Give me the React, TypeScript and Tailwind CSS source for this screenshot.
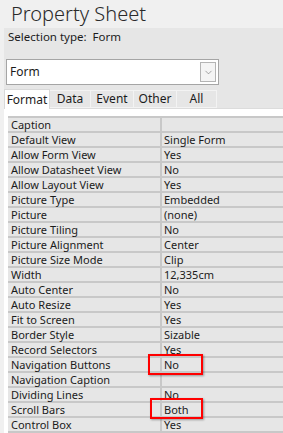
import { ChevronDown } from "lucide-react";

type Row = { readonly label: string; readonly value: string };

const rows: Row[] = [
  { label: "Caption", value: "" },
  { label: "Default View", value: "Single Form" },
  { label: "Allow Form View", value: "Yes" },
  { label: "Allow Datasheet View", value: "No" },
  { label: "Allow Layout View", value: "Yes" },
  { label: "Picture Type", value: "Embedded" },
  { label: "Picture", value: "(none)" },
  { label: "Picture Tiling", value: "No" },
  { label: "Picture Alignment", value: "Center" },
  { label: "Picture Size Mode", value: "Clip" },
  { label: "Width", value: "12,335cm" },
  { label: "Auto Center", value: "No" },
  { label: "Auto Resize", value: "Yes" },
  { label: "Fit to Screen", value: "Yes" },
  { label: "Border Style", value: "Sizable" },
  { label: "Record Selectors", value: "Yes" },
  { label: "Navigation Buttons", value: "No" },
  { label: "Navigation Caption", value: "" },
  { label: "Dividing Lines", value: "No" },
  { label: "Scroll Bars", value: "Both" },
  { label: "Control Box", value: "Yes" },
];

const tabs = ["Data", "Event", "Other", "All"];

export default function App() {
  return (
    <div className="relative h-[433px] w-[283px] overflow-hidden bg-[#f0f0f0] font-['Noto_Sans',sans-serif] text-[#1b1b1b]">
      <div className="h-[28px] pl-[11px] text-[20px] font-light leading-[28px] text-[#2a2a2a]">Property Sheet</div>

      <div className="ml-[4px] flex h-[405px] flex-col bg-[#e6e6e6]">
        <div className="h-[31px] pl-[4px] pt-[1px] text-[11.5px] leading-[15px]">Selection type:&nbsp;&nbsp;Form</div>

        <div className="ml-[2px] flex h-[26px] w-[213px] items-center border border-[#a5a5a5] bg-white pr-[2px]">
          <span className="flex-1 pl-[3px] text-[12px]">Form</span>
          <div className="flex h-[20px] w-[16px] items-center justify-center border border-[#b4b4b4] bg-[#f4f4f4]">
            <ChevronDown size={11} strokeWidth={1.25} className="text-[#666]" />
          </div>
        </div>

        <div className="mt-[3px] flex h-[20px] items-end text-[12px]">
          <div className="z-10 -mb-px flex h-[20px] w-[46px] items-center justify-center border border-b-0 border-[#d9d9d9] bg-white">
            Format
          </div>
          {tabs.map((t, i) => (
            <div
              key={t}
              className={`flex h-[18px] items-center justify-center border border-l-0 border-[#f3f3f3] ${
                i === 0 ? "w-[41px]" : i === 3 ? "w-[40px]" : "w-[43px]"
              }`}
            >
              {t}
            </div>
          ))}
        </div>

        <div className="flex-1 border-t border-[#dcdcdc] bg-white pl-[4px] pt-[7px]">
          <div className="border-t-2 border-[#c8c8c8] text-[11px]">
            {rows.map((r) => (
              <div key={r.label} className="flex h-[15px] border-b-2 border-[#c8c8c8] bg-[#e6e6e6] leading-[13px]">
                <div className="w-[152px] whitespace-nowrap pl-[3px]">{r.label}</div>
                <div className="w-[2px] bg-[#c8c8c8]" />
                <div className="flex-1 whitespace-nowrap pl-[2px]">{r.value}</div>
              </div>
            ))}
          </div>
        </div>
      </div>

      <div className="absolute left-[148px] top-[354px] h-[21px] w-[55px] border-2 border-[#f00] shadow-[1px_1px_2px_rgba(0,0,0,0.35)]" />
      <div className="absolute left-[150px] top-[398px] h-[21px] w-[53px] border-2 border-[#f00] shadow-[1px_1px_2px_rgba(0,0,0,0.35)]" />
    </div>
  );
}
